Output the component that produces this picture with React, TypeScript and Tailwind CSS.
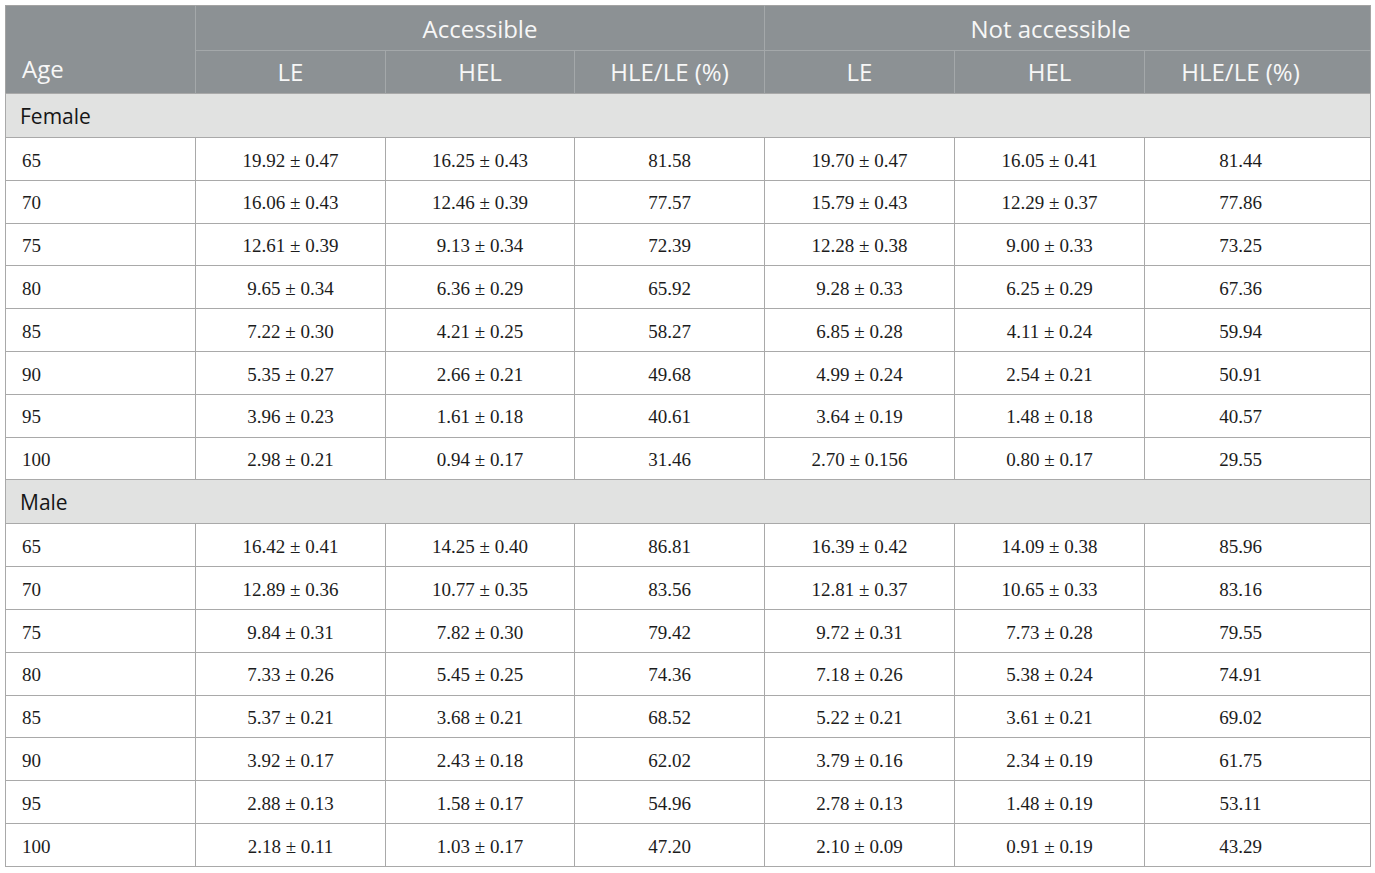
import React from "react";

type Row = [string, string, string, string, string, string, string];

const female: Row[] = [
  ["65", "19.92 ± 0.47", "16.25 ± 0.43", "81.58", "19.70 ± 0.47", "16.05 ± 0.41", "81.44"],
  ["70", "16.06 ± 0.43", "12.46 ± 0.39", "77.57", "15.79 ± 0.43", "12.29 ± 0.37", "77.86"],
  ["75", "12.61 ± 0.39", "9.13 ± 0.34", "72.39", "12.28 ± 0.38", "9.00 ± 0.33", "73.25"],
  ["80", "9.65 ± 0.34", "6.36 ± 0.29", "65.92", "9.28 ± 0.33", "6.25 ± 0.29", "67.36"],
  ["85", "7.22 ± 0.30", "4.21 ± 0.25", "58.27", "6.85 ± 0.28", "4.11 ± 0.24", "59.94"],
  ["90", "5.35 ± 0.27", "2.66 ± 0.21", "49.68", "4.99 ± 0.24", "2.54 ± 0.21", "50.91"],
  ["95", "3.96 ± 0.23", "1.61 ± 0.18", "40.61", "3.64 ± 0.19", "1.48 ± 0.18", "40.57"],
  ["100", "2.98 ± 0.21", "0.94 ± 0.17", "31.46", "2.70 ± 0.156", "0.80 ± 0.17", "29.55"],
];

const male: Row[] = [
  ["65", "16.42 ± 0.41", "14.25 ± 0.40", "86.81", "16.39 ± 0.42", "14.09 ± 0.38", "85.96"],
  ["70", "12.89 ± 0.36", "10.77 ± 0.35", "83.56", "12.81 ± 0.37", "10.65 ± 0.33", "83.16"],
  ["75", "9.84 ± 0.31", "7.82 ± 0.30", "79.42", "9.72 ± 0.31", "7.73 ± 0.28", "79.55"],
  ["80", "7.33 ± 0.26", "5.45 ± 0.25", "74.36", "7.18 ± 0.26", "5.38 ± 0.24", "74.91"],
  ["85", "5.37 ± 0.21", "3.68 ± 0.21", "68.52", "5.22 ± 0.21", "3.61 ± 0.21", "69.02"],
  ["90", "3.92 ± 0.17", "2.43 ± 0.18", "62.02", "3.79 ± 0.16", "2.34 ± 0.19", "61.75"],
  ["95", "2.88 ± 0.13", "1.58 ± 0.17", "54.96", "2.78 ± 0.13", "1.48 ± 0.19", "53.11"],
  ["100", "2.18 ± 0.11", "1.03 ± 0.17", "47.20", "2.10 ± 0.09", "0.91 ± 0.19", "43.29"],
];

const sans = "font-['Open_Sans',sans-serif]";
const serif = "font-['Liberation_Serif',serif]";

function DataRows({ rows }: { rows: Row[] }) {
  return (
    <>
      {rows.map((r, i) => (
        <tr key={i} className="h-[42.8px]">
          {r.map((c, j) => (
            <td
              key={j}
              className={`border border-[#a9a9a9] ${serif} text-[19px] text-[#1c1c1c] p-0 pt-[4px] ${
                j === 0 ? "text-left pl-[16px]" : j === 6 ? "text-center pr-[34px]" : "text-center"
              }`}
            >
              {c}
            </td>
          ))}
        </tr>
      ))}
    </>
  );
}

function Section({ label }: { label: string }) {
  return (
    <tr className="h-[44px] bg-[#e1e2e1]">
      <td
        colSpan={7}
        className={`border border-[#a9a9a9] ${sans} text-[21px] text-[#161616] text-left pl-[14px] p-0 pt-[2px]`}
      >
        {label}
      </td>
    </tr>
  );
}

export default function App() {
  const hd = `${sans} text-[24px] text-[#f7f7f7] font-normal p-0`;
  return (
    <div className="w-[1375px] h-[873px] bg-white pt-[5px] pl-[5px]">
      <table className="border-collapse table-fixed w-[1365px] border border-[#a3a3a3]">
        <colgroup>
          <col className="w-[190px]" />
          <col className="w-[190px]" />
          <col className="w-[189px]" />
          <col className="w-[190px]" />
          <col className="w-[190px]" />
          <col className="w-[190px]" />
          <col className="w-[226px]" />
        </colgroup>
        <thead className="bg-[#8c9194]">
          <tr className="h-[45px]">
            <th
              rowSpan={2}
              className={`${hd} text-left align-bottom pl-[16px] pb-[6px] border-r border-[#a4a8aa]`}
            >
              Age
            </th>
            <th colSpan={3} className={`${hd} text-center pt-[2px] border-r border-b border-[#a4a8aa]`}>
              Accessible
            </th>
            <th colSpan={3} className={`${hd} text-center pt-[2px] pr-[34px] border-b border-[#a4a8aa]`}>
              Not accessible
            </th>
          </tr>
          <tr className="h-[43px]">
            {["LE", "HEL", "HLE/LE (%)", "LE", "HEL", "HLE/LE (%)"].map((h, i) => (
              <th
                key={i}
                className={`${hd} text-center ${i < 5 ? "border-r" : "pr-[34px]"} border-[#a4a8aa]`}
              >
                {h}
              </th>
            ))}
          </tr>
        </thead>
        <tbody>
          <Section label="Female" />
          <DataRows rows={female} />
          <Section label="Male" />
          <DataRows rows={male} />
        </tbody>
      </table>
    </div>
  );
}
